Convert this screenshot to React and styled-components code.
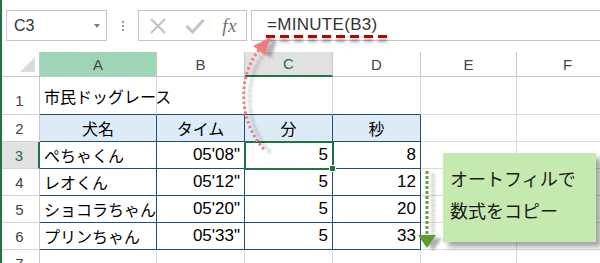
import React from 'react';
import styled, { createGlobalStyle } from 'styled-components';

const GlobalStyle = createGlobalStyle`
  html, body {
    margin: 0;
    padding: 0;
    background: #fff;
  }
  body {
    font-family: 'Liberation Sans', 'Noto Sans CJK JP', sans-serif;
  }
`;

const Sheet = styled.div`
  position: relative;
  width: 600px;
  height: 263px;
  overflow: hidden;
  background: #fff;

  &::after {
    content: '';
    position: absolute;
    left: 0;
    top: 0;
    bottom: 0;
    width: 2px;
    background: #217346;
    z-index: 10;
  }
`;

const Toolbar = styled.div`
  display: flex;
  align-items: flex-start;
  height: 52px;
  padding-top: 10px;
  box-sizing: border-box;
`;

const NameBox = styled.div`
  display: flex;
  align-items: center;
  justify-content: space-between;
  box-sizing: border-box;
  width: 101px;
  height: 31px;
  margin-left: 6px;
  padding: 0 6px 0 7px;
  border: 1px solid #c6c6c6;
  font-size: 16px;
  color: #333;

  &::after {
    content: '';
    border-left: 3.5px solid transparent;
    border-right: 3.5px solid transparent;
    border-top: 4px solid #808080;
  }
`;

const Grip = styled.div`
  display: flex;
  flex-direction: column;
  align-items: center;
  gap: 2px;
  width: 31px;
  padding-top: 11px;

  span {
    width: 2px;
    height: 2px;
    background: #9a9a9a;
  }
`;

const IconBox = styled.div`
  display: flex;
  align-items: center;
  justify-content: space-between;
  box-sizing: border-box;
  width: 109px;
  height: 31px;
  padding: 0 9px 0 10px;
  border: 1px solid #c6c6c6;
`;

const Fx = styled.span`
  font-family: 'Liberation Serif', serif;
  font-style: italic;
  font-size: 19px;
  color: #6f6f6f;
  letter-spacing: 0.5px;
`;

const FormulaBox = styled.div`
  flex: 1;
  display: flex;
  align-items: center;
  box-sizing: border-box;
  height: 31px;
  margin-left: 4px;
  padding-left: 15px;
  border: 1px solid #c6c6c6;
  border-right: none;
`;

const Formula = styled.span`
  position: relative;
  font-size: 17px;
  color: #333;
  letter-spacing: 0.3px;
  margin-top: -2px;

  &::after {
    content: '';
    position: absolute;
    left: -1px;
    right: -9px;
    bottom: -3px;
    height: 3px;
    background: repeating-linear-gradient(90deg, #c00000 0 9px, transparent 9px 14px);
    filter: drop-shadow(0 4px 1.5px rgba(0, 0, 0, 0.35));
  }
`;

const Grid = styled.div`
  display: grid;
  grid-template-columns: 40px 117px 88px 88px 88px 96px 102px;
  grid-template-rows: 25px 38px repeat(6, 27px);
  font-size: 16px;
`;

const Corner = styled.div`
  position: relative;
  box-sizing: border-box;
  border-right: 1px solid #c8c8c8;
  border-bottom: 1px solid #c8c8c8;

  &::after {
    content: '';
    position: absolute;
    right: 4px;
    bottom: 4px;
    border-left: 15px solid transparent;
    border-bottom: 15px solid #dcdcdc;
  }
`;

const ColHead = styled.div`
  display: flex;
  align-items: center;
  justify-content: center;
  box-sizing: border-box;
  font-size: 15px;
  color: ${p => (p.$current ? '#217346' : '#444')};
  background: ${p => (p.$selected ? '#9fd5b7' : p.$current ? '#e1e1e1' : '#fff')};
  border-right: 1px solid #c8c8c8;
  border-bottom: ${p => (p.$current ? '2px solid #217346' : '1px solid #c8c8c8')};
`;

const RowHead = styled.div`
  display: flex;
  align-items: center;
  justify-content: center;
  box-sizing: border-box;
  padding-top: ${p => (p.$tall ? '10px' : '0')};
  font-size: 15px;
  color: ${p => (p.$current ? '#217346' : '#444')};
  background: ${p => (p.$current ? '#e1e1e1' : '#fff')};
  border-right: ${p => (p.$current ? '2px solid #217346' : '1px solid #c8c8c8')};
  border-bottom: 1px solid #d4d4d4;
`;

const Cell = styled.div`
  position: relative;
  display: flex;
  align-items: center;
  justify-content: ${p => (p.$align === 'right' ? 'flex-end' : p.$align === 'center' ? 'center' : 'flex-start')};
  box-sizing: border-box;
  padding: 0 4px;
  white-space: nowrap;
  color: #000;
  font-size: ${p => (p.$num ? '17px' : '16px')};
  background: ${p => (p.$head ? '#ddebf7' : 'transparent')};
  border-right: 1px solid ${p => (p.$table ? '#1f4e79' : '#dadada')};
  border-bottom: 1px solid ${p => (p.$table || p.$above ? '#1f4e79' : '#dadada')};
  ${p => p.$selected && `
    outline: 2px solid #217346;
    outline-offset: -1px;
    z-index: 2;
    &::after {
      content: '';
      position: absolute;
      right: -4px;
      bottom: -4px;
      width: 5px;
      height: 5px;
      background: #217346;
      border: 1px solid #fff;
    }
  `}
`;

const Callout = styled.div`
  position: absolute;
  left: 443px;
  top: 153px;
  width: 153px;
  height: 89px;
  box-sizing: border-box;
  padding: 11px 0 0 7px;
  background: #c6e9b0;
  box-shadow: 5px 5px 5px rgba(0, 0, 0, 0.35);
  font-size: 18px;
  line-height: 32px;
  color: #1a1a1a;
  white-space: nowrap;
  z-index: 4;
`;

const Overlay = styled.svg`
  position: absolute;
  left: 0;
  top: 0;
  width: 600px;
  height: 263px;
  pointer-events: none;
  z-index: 3;
  overflow: visible;
`;

const columns = ['A', 'B', 'C', 'D', 'E', 'F'];
const blank = () => [{}, {}];

const rows = [
  { n: 1, tall: true, cells: [{ t: '市民ドッグレース', above: true }, { above: true }, { above: true }, { above: true }, ...blank()] },
  {
    n: 2,
    cells: [
      { t: '犬名', a: 'center', table: true, head: true },
      { t: 'タイム', a: 'center', table: true, head: true },
      { t: '分', a: 'center', table: true, head: true },
      { t: '秒', a: 'center', table: true, head: true },
      ...blank(),
    ],
  },
  { n: 3, current: true, data: ['ぺちゃくん', `05'08"`, '5', '8'] },
  { n: 4, data: ['レオくん', `05'12"`, '5', '12'] },
  { n: 5, data: ['ショコラちゃん', `05'20"`, '5', '20'] },
  { n: 6, data: ['プリンちゃん', `05'33"`, '5', '33'] },
  { n: 7, cells: [{}, {}, {}, {}, ...blank()] },
];

const toCells = row => {
  if (row.cells) return row.cells;
  const [name, time, min, sec] = row.data;
  return [
    { t: name, table: true },
    { t: time, a: 'right', table: true, num: true },
    { t: min, a: 'right', table: true, num: true, selected: row.current },
    { t: sec, a: 'right', table: true, num: true },
    ...blank(),
  ];
};

const Arrows = () => (
  <Overlay viewBox="0 0 600 263">
    <defs>
      <filter id="sh" x="-50%" y="-20%" width="200%" height="140%">
        <feDropShadow dx="6" dy="3" stdDeviation="1.6" floodColor="#000" floodOpacity="0.3" />
      </filter>
    </defs>
    <g filter="url(#sh)">
      <path
        d="M264 149 C 240 124, 236 78, 259 50"
        fill="none"
        stroke="#f07c84"
        strokeWidth="3"
        strokeDasharray="2.5 2.5"
      />
      <polygon points="271,37 253,46 265,55" fill="#f07c84" />
    </g>
    <g filter="url(#sh)">
      <line x1="427" y1="171" x2="427" y2="236" stroke="#62a03a" strokeWidth="3" strokeDasharray="3 2" />
      <polygon points="418,235 436,235 427,248" fill="#5c9b31" />
    </g>
  </Overlay>
);

const App = () => (
  <Sheet>
    <GlobalStyle />
    <Toolbar>
      <NameBox>C3</NameBox>
      <Grip>
        <span />
        <span />
        <span />
      </Grip>
      <IconBox>
        <svg width="18" height="16" viewBox="0 0 18 16">
          <path d="M2 1 L16 15 M16 1 L2 15" stroke="#c4c4c4" strokeWidth="2.2" fill="none" />
        </svg>
        <svg width="20" height="16" viewBox="0 0 20 16">
          <path d="M1.5 8 L7.5 14 L18.5 2" stroke="#c4c4c4" strokeWidth="3" fill="none" />
        </svg>
        <Fx>fx</Fx>
      </IconBox>
      <FormulaBox>
        <Formula>=MINUTE(B3)</Formula>
      </FormulaBox>
    </Toolbar>
    <Grid>
      <Corner />
      {columns.map(c => (
        <ColHead key={c} $selected={c === 'A'} $current={c === 'C'}>
          {c}
        </ColHead>
      ))}
      {rows.map(row => (
        <React.Fragment key={row.n}>
          <RowHead $current={row.current} $tall={row.tall}>
            {row.n}
          </RowHead>
          {toCells(row).map((cell, i) => (
            <Cell
              key={i}
              $align={cell.a}
              $table={cell.table}
              $head={cell.head}
              $above={cell.above}
              $num={cell.num}
              $selected={cell.selected}
            >
              {cell.t}
            </Cell>
          ))}
        </React.Fragment>
      ))}
    </Grid>
    <Arrows />
    <Callout>
      オートフィルで
      <br />
      数式をコピー
    </Callout>
  </Sheet>
);

export default App;
